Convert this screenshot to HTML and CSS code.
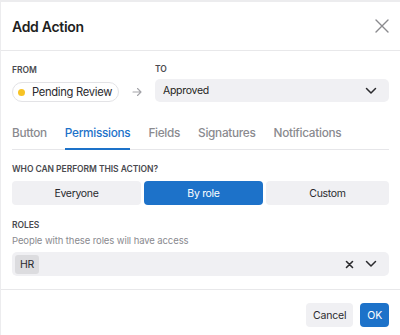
FILE: index.html
```html
<!DOCTYPE html>
<html>
<head>
<meta charset="utf-8">
<link rel="stylesheet" href="styles.css">
</head>
<body>
<div class="modal">
  <header class="header">
    <h1 class="title">Add Action</h1>
    <svg class="close" width="14" height="14" viewBox="0 0 14 14"><path d="M1 1L13 13M13 1L1 13" stroke="#8a8a8e" stroke-width="1.4" stroke-linecap="round"/></svg>
  </header>
  <div class="body">
    <div class="transition">
      <div class="from">
        <div class="label">FROM</div>
        <div class="pill"><span class="dot"></span>Pending Review</div>
      </div>
      <svg class="arrow" width="10" height="10" viewBox="0 0 10 10"><path d="M1 5H9M5.5 1.5L9 5L5.5 8.5" fill="none" stroke="#a3a3a8" stroke-width="1.1" stroke-linecap="round" stroke-linejoin="round"/></svg>
      <div class="to">
        <div class="label">TO</div>
        <div class="select"><span>Approved</span>
          <svg width="12" height="8" viewBox="0 0 12 8"><path d="M1.5 1.5L6 6L10.5 1.5" fill="none" stroke="#2b2b2e" stroke-width="1.5" stroke-linecap="round" stroke-linejoin="round"/></svg>
        </div>
      </div>
    </div>
    <nav class="tabs">
      <span class="tab">Button</span>
      <span class="tab active">Permissions</span>
      <span class="tab">Fields</span>
      <span class="tab">Signatures</span>
      <span class="tab">Notifications</span>
    </nav>
    <div class="label section">WHO CAN PERFORM THIS ACTION?</div>
    <div class="segments">
      <button class="seg">Everyone</button>
      <button class="seg on">By role</button>
      <button class="seg">Custom</button>
    </div>
    <div class="label section2">ROLES</div>
    <div class="hint">People with these roles will have access</div>
    <div class="multi">
      <span class="chip">HR</span>
      <span class="icons">
        <svg width="9" height="9" viewBox="0 0 9 9"><path d="M1.5 1.5L7.5 7.5M7.5 1.5L1.5 7.5" stroke="#2b2b2e" stroke-width="1.6" stroke-linecap="round"/></svg>
        <svg width="12" height="8" viewBox="0 0 12 8"><path d="M1.5 1.5L6 6L10.5 1.5" fill="none" stroke="#2b2b2e" stroke-width="1.5" stroke-linecap="round" stroke-linejoin="round"/></svg>
      </span>
    </div>
  </div>
  <footer class="footer">
    <button class="btn cancel">Cancel</button>
    <button class="btn ok">OK</button>
  </footer>
</div>
</body>
</html>
```
FILE: styles.css
```css
* { box-sizing: border-box; }
html, body { margin: 0; padding: 0; }
body {
  background: #ececee;
  font-family: Inter, "Noto Sans", sans-serif;
  color: #1f1f22;
  width: 400px;
  height: 335px;
  overflow: hidden;
}
.modal {
  background: #fff;
  margin: 2px 0 0 1px;
  height: 340px;
}
.header {
  height: 49px;
  display: flex;
  align-items: center;
  justify-content: space-between;
  padding: 0 11px 0 11px;
  border-bottom: 1px solid #e8e8ea;
}
.title {
  margin: 0;
  font-size: 14px;
  font-weight: 600;
  letter-spacing: -0.3px;
}
.body { padding: 0 11px; }
.label {
  font-size: 8.5px;
  font-weight: 600;
  color: #4a4a4f;
  letter-spacing: -0.05px;
}
.transition {
  display: flex;
  align-items: flex-end;
  padding-top: 13px;
}
.transition .label { margin-bottom: 7px; }
.pill {
  display: flex;
  align-items: center;
  height: 20px;
  padding: 0 6px 0 5px;
  border: 1px solid #e3e3e6;
  border-radius: 10px;
  font-size: 11.2px;
  letter-spacing: -0.3px;
  color: #2a2a2e;
  white-space: nowrap;
}
.dot {
  width: 7px; height: 7px; border-radius: 50%;
  background: #f7c325;
  margin-right: 7px;
}
.arrow { margin: 0 13px 5px 13px; }
.to { flex: 1; }
.select {
  height: 23px;
  background: #f0f0f3;
  border-radius: 5px;
  display: flex;
  align-items: center;
  justify-content: space-between;
  padding: 0 12px 0 8px;
  font-size: 10.5px;
  letter-spacing: -0.3px;
  margin-top: -2px;
}
.tabs {
  display: flex;
  gap: 18px;
  margin-top: 22px;
  border-bottom: 1px solid #e6e6e9;
  font-size: 11.8px;
  letter-spacing: -0.3px;
  font-weight: 500;
  color: #8a8a8f;
}
.tab { padding: 2px 0 8px; }
.tab.active {
  color: #1d72c9;
  border-bottom: 2px solid #1d72c9;
  margin-bottom: -1px;
}
.section { margin-top: 14px; }
.segments {
  display: flex;
  gap: 3px;
  margin-top: 7px;
}
.seg {
  height: 24px;
  border: none;
  border-radius: 4px;
  background: #f0f0f3;
  font-family: inherit;
  font-size: 10.5px;
  letter-spacing: -0.3px;
  color: #2a2a2e;
  padding: 0;
}
.seg:nth-child(1) { width: 129px; }
.seg:nth-child(2) { width: 119px; }
.seg:nth-child(3) { flex: 1; }
.seg.on { background: #1d72c9; color: #fff; }
.section2 { margin-top: 15px; }
.hint {
  font-size: 9.5px;
  letter-spacing: -0.1px;
  color: #8a8a8f;
  margin-top: 5px;
}
.multi {
  margin-top: 6px;
  height: 24px;
  background: #f0f0f3;
  border-radius: 5px;
  display: flex;
  align-items: center;
  justify-content: space-between;
  padding: 0 12px 0 3px;
}
.chip {
  background: #dcdcdf;
  border-radius: 3px;
  font-size: 10.5px;
  letter-spacing: -0.2px;
  padding: 3px 5px;
  color: #2a2a2e;
}
.icons { display: flex; align-items: center; gap: 11px; }
.footer {
  margin-top: 13px;
  border-top: 1px solid #e8e8ea;
  display: flex;
  justify-content: flex-end;
  gap: 7px;
  padding: 13px 11px 0;
}
.btn {
  height: 24px;
  border: none;
  border-radius: 4px;
  font-family: inherit;
  font-size: 10.5px;
  letter-spacing: -0.2px;
  padding: 0 7px;
}
.cancel { background: #f0f0f3; color: #2a2a2e; }
.ok { background: #1d72c9; color: #fff; padding: 0 7px; }
```
